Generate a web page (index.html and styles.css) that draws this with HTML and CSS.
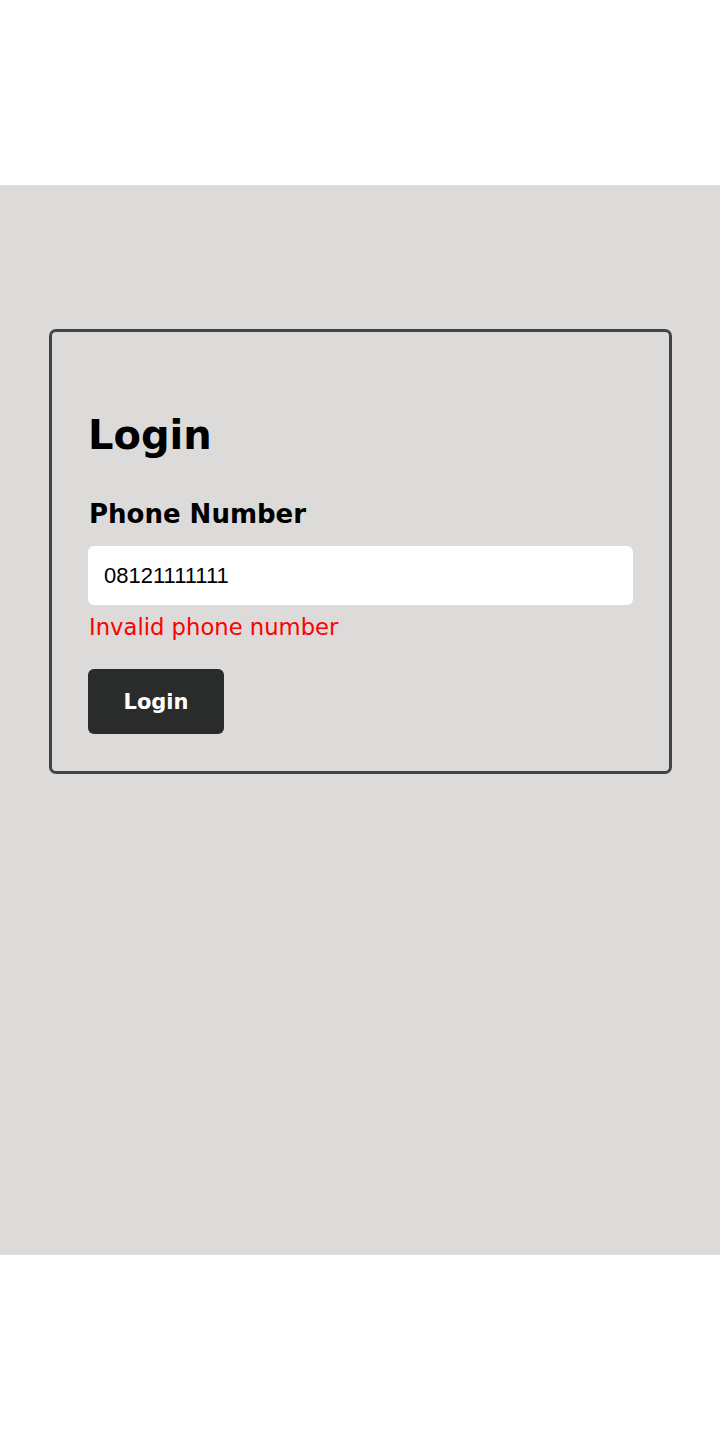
FILE: index.html
```html
<!DOCTYPE html>
<html>
<head>
<meta charset="utf-8">
<link rel="stylesheet" href="styles.css">
</head>
<body>
<div class="top"></div>
<main class="main">
  <div class="card">
    <h1 class="title">Login</h1>
    <label class="label" for="phone">Phone Number</label>
    <input class="input" id="phone" type="text" value="08121111111" autofocus>
    <div class="error">Invalid phone number</div>
    <button class="btn">Login</button>
  </div>
</main>
<div class="bottom"></div>
</body>
</html>
```

FILE: styles.css
```css
* { box-sizing: border-box; }
html, body { margin: 0; padding: 0; background: #fff; }
body { font-family: "DejaVu Sans", "Noto Sans", sans-serif; }
.top { height: 185px; }
.main {
  height: 1070px;
  background: #dcdbda;
  padding: 144px 48px 0 49px;
}
.card {
  border: 3px solid #444;
  border-radius: 7px;
  padding: 36px 36px 37px 36px;
  display: flex;
  flex-direction: column;
  align-items: flex-start;
}
.title {
  margin: 40px 0 0 0;
  font-size: 40px;
  font-weight: 700;
  line-height: 54px;
  color: #000;
}
.label {
  margin-top: 37px;
  margin-left: 1px;
  font-size: 26px;
  font-weight: 700;
  line-height: 30px;
  color: #000;
}
.input {
  margin-top: 17px;
  width: 100%;
  height: 59px;
  border: none;
  border-radius: 6px;
  background: #fff;
  padding: 0 16px;
  font-family: "Liberation Sans", Arial, sans-serif;
  font-size: 22px;
  color: #000;
  caret-color: #000;
  outline: none;
}
.error {
  margin-top: 8px;
  margin-left: 1px;
  font-size: 22.7px;
  line-height: 28px;
  color: #ff0000;
}
.btn {
  margin-top: 28px;
  width: 136px;
  height: 65px;
  border: none;
  border-radius: 6px;
  background: #2a2b2b;
  color: #fff;
  font-family: "DejaVu Sans", "Noto Sans", sans-serif;
  font-size: 21px;
  font-weight: 700;
}
```
